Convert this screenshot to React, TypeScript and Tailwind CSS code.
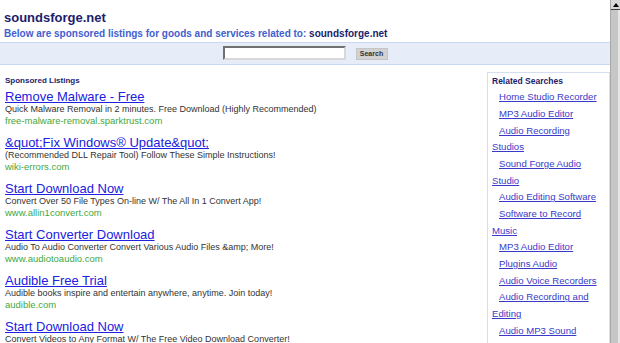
import React from 'react';

const LISTINGS = [
  {
    title: 'Remove Malware - Free',
    desc: 'Quick Malware Removal in 2 minutes. Free Download (Highly Recommended)',
    url: 'free-malware-removal.sparktrust.com',
  },
  {
    title: '&quot;Fix Windows® Update&quot;',
    desc: '(Recommended DLL Repair Tool) Follow These Simple Instructions!',
    url: 'wiki-errors.com',
  },
  {
    title: 'Start Download Now',
    desc: 'Convert Over 50 File Types On-line W/ The All In 1 Convert App!',
    url: 'www.allin1convert.com',
  },
  {
    title: 'Start Converter Download',
    desc: 'Audio To Audio Converter Convert Various Audio Files &amp; More!',
    url: 'www.audiotoaudio.com',
  },
  {
    title: 'Audible Free Trial',
    desc: 'Audible books inspire and entertain anywhere, anytime. Join today!',
    url: 'audible.com',
  },
  {
    title: 'Start Download Now',
    desc: 'Convert Videos to Any Format W/ The Free Video Download Converter!',
    url: '',
  },
];

const RELATED = [
  'Home Studio Recorder',
  'MP3 Audio Editor',
  'Audio Recording Studios',
  'Sound Forge Audio Studio',
  'Audio Editing Software',
  'Software to Record Music',
  'MP3 Audio Editor',
  'Plugins Audio',
  'Audio Voice Recorders',
  'Audio Recording and Editing',
  'Audio MP3 Sound',
];

export default function App() {
  return (
    <div className="flex h-[343px] w-[620px] overflow-hidden bg-white font-['Liberation_Sans',Arial,sans-serif]">
      <div className="w-[610px] shrink-0">
        {/* header */}
        <div className="pl-[4px] pt-[10px]">
          <h1 className="text-[13px] font-bold leading-[15px] text-[#1c1c6c]">soundsforge.net</h1>
          <p className="mt-[2.5px] text-[10px] font-bold leading-[12px] text-[#4160d0]">
            Below are sponsored listings for goods and services related to:{' '}
            <span className="text-[#1c1c6c]">soundsforge.net</span>
          </p>
        </div>

        {/* search band */}
        <div className="mt-[2.5px] flex h-[23px] justify-center border-y border-[#cbd8f1] bg-[#e6edf9]">
          <input
            type="text"
            className="mt-[3px] h-[14px] w-[123px] border-2 border-b-[#d8d8d8] border-l-[#707070] border-r-[#d8d8d8] border-t-[#707070] bg-white outline-none"
          />
          <button className="ml-[10px] mt-[5px] h-[12px] w-[32px] border border-[#c4c4c4] bg-[#d2d2d2] text-[7px] font-bold leading-[10px] text-[#333]">
            Search
          </button>
        </div>

        <div className="flex">
          {/* listings */}
          <div className="flex-1 pl-[5px] pt-[11px]">
            <div className="text-[8px] font-bold leading-[10px] text-[#1c1c6c]">Sponsored Listings</div>
            <div className="mt-[3.3px]">
              {LISTINGS.map((l, i) => (
                <div key={i} className="mb-[9px]">
                  <a href="#" className="block text-[13px] leading-[15px] text-[#2020e0] underline">
                    {l.title}
                  </a>
                  <div className="text-[9px] leading-[11px] text-[#333]">{l.desc}</div>
                  {l.url && <div className="text-[9.5px] leading-[11px] text-[#3fa83f]">{l.url}</div>}
                </div>
              ))}
            </div>
          </div>

          {/* related searches */}
          <div className="mt-[7px] h-[300px] w-[123px] shrink-0 border border-[#d5def0] pl-[4px] pr-[6px] pt-[3px]">
            <div className="text-[8.5px] font-bold leading-[10px] text-[#1c1c6c]">Related Searches</div>
            <div className="mt-[3.2px]">
              {RELATED.map((r, i) => (
                <div key={i} className="indent-[7px] text-[9.6px] leading-[16.67px]">
                  <a href="#" className="text-[#3a3ac8] underline">
                    {r}
                  </a>
                </div>
              ))}
            </div>
          </div>
        </div>
      </div>

      {/* scrollbar */}
      <div className="flex w-[10px] shrink-0 flex-col border-l border-[#a8a8a8] bg-[#c6c6c6]">
        <div className="flex h-[10px] items-center justify-center border-b border-[#404040] bg-[#d8d8d8]">
          <svg width="6" height="4" viewBox="0 0 6 4">
            <polygon points="3,0 6,4 0,4" fill="#000" />
          </svg>
        </div>
        <div className="flex-1 border-r-2 border-[#e6e6e6]" />
      </div>
    </div>
  );
}
